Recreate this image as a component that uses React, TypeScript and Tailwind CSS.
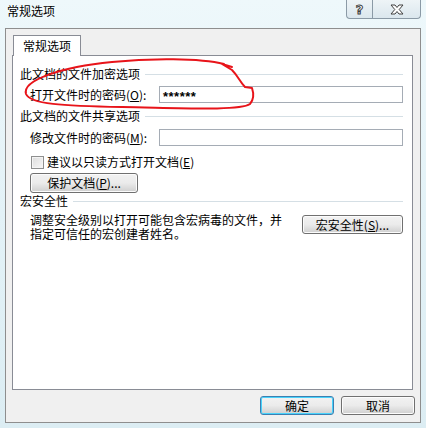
import React from 'react';

const font = "font-['SimSun','Noto_Sans_CJK_SC',sans-serif]";

function GroupHeading({ text, className = '' }: { text: string; className?: string }) {
  return (
    <div className={`flex items-center h-[16px] ${className}`}>
      <span className="leading-[16px]">{text}</span>
      <div className="flex-1 h-px bg-[#d5dfe5] ml-[5px]" />
    </div>
  );
}

function WinButton({ children, className = '', focused = false }: { children: React.ReactNode; className?: string; focused?: boolean }) {
  return (
    <div
      className={`flex items-center justify-center rounded-[3px] border ${
        focused ? 'border-[#3c7fb1] shadow-[inset_0_0_0_1px_#48d2fb]' : 'border-[#707070] shadow-[inset_0_0_0_1px_#fcfcfc]'
      } bg-gradient-to-b from-[#f2f2f2] via-[#ebebeb] to-[#cfcfcf] leading-none ${className}`}
    >
      {children}
    </div>
  );
}

export default function App() {
  return (
    <div className={`relative w-[426px] h-[428px] overflow-hidden bg-gradient-to-b from-[#eef8fb] via-[#e3f2f7] to-[#dcedf3] text-[12px] text-black ${font}`}>
      {/* ── Title bar ── */}
      <div className="flex h-[28px]">
        <span className="pl-[7px] pt-[4px] leading-[14px] [text-shadow:0_0_6px_#ffffff]">常规选项</span>
        <div className="ml-auto mr-[5px] flex h-[19px]">
          <div className="w-[27px] h-full flex items-center justify-center border border-t-0 border-[#8b9aa6] rounded-bl-[4px] bg-gradient-to-b from-[#eef4f7] to-[#dbe7ee]">
            <span className="text-white font-bold text-[13px] leading-none [-webkit-text-stroke:1px_#3f3f3f] font-['DejaVu_Sans',sans-serif]">?</span>
          </div>
          <div className="w-[48px] h-full flex items-center justify-center border border-t-0 border-l-0 border-[#8b9aa6] rounded-br-[4px] bg-gradient-to-b from-[#eef4f7] to-[#dbe7ee]">
            <svg width="14" height="11" viewBox="0 0 14 11">
              <path d="M1 1 H5 L7 3.5 L9 1 H13 L9.2 5.5 L13 10 H9 L7 7.5 L5 10 H1 L4.8 5.5 Z" fill="#ffffff" stroke="#404040" strokeWidth="1" strokeLinejoin="round" />
            </svg>
          </div>
        </div>
      </div>

      {/* ── Client area ── */}
      <div className="ml-[5px] w-[416px] h-[395px] border border-[#8e8e8e] bg-[#f0f0f0] flex flex-col px-[6px] pt-[6px]">
        {/* Tab */}
        <div className="flex">
          <div className="relative z-10 ml-[1px] -mb-px w-[68px] h-[21px] border border-b-0 border-[#898c95] bg-white flex items-center justify-center leading-none pb-[1px]">
            常规选项
          </div>
        </div>

        {/* Panel */}
        <div className="w-[401px] h-[335px] border border-[#898c95] bg-white pl-[7px] pr-[9px] pt-[10px] flex flex-col">
          <GroupHeading text="此文档的文件加密选项" />
          <div className="flex items-center h-[17px] mt-[4px] pl-[10px]">
            <span className="w-[129px] leading-none">
              打开文件时的密码(<span className="underline">O</span>):
            </span>
            <div className="flex-1 h-full border border-[#a5acb5] bg-white flex items-center pl-[3px] font-['Liberation_Sans',sans-serif] text-[13px] font-bold leading-none tracking-[0.5px] pt-[3px]">
              ******
            </div>
          </div>

          <GroupHeading text="此文档的文件共享选项" className="mt-[5px]" />
          <div className="flex items-center h-[17px] mt-[5px] pl-[10px]">
            <span className="w-[129px] leading-none">
              修改文件时的密码(<span className="underline">M</span>):
            </span>
            <div className="flex-1 h-full border border-[#a5acb5] bg-white" />
          </div>

          <div className="flex items-center h-[16px] mt-[8px] pl-[11px]">
            <div className="w-[13px] h-[13px] border border-[#8e8f8f] bg-gradient-to-br from-[#dcdcdc] to-[#f7f7f7] shadow-[inset_0_0_0_1px_#f4f4f4]" />
            <span className="ml-[3px] leading-none">
              建议以只读方式打开文档(<span className="underline">E</span>)
            </span>
          </div>

          <div className="flex mt-[3px] pl-[10px]">
            <WinButton className="w-[108px] h-[20px]">
              保护文档(<span className="underline">P</span>)...
            </WinButton>
          </div>

          <GroupHeading text="宏安全性" />
          <div className="flex items-start mt-[4px] pl-[10px]">
            <p className="leading-[14px]">
              调整安全级别以打开可能包含宏病毒的文件，并
              <br />
              指定可信任的宏创建者姓名。
            </p>
            <WinButton className="ml-auto mt-[2px] w-[101px] h-[19px]">
              宏安全性(<span className="underline">S</span>)...
            </WinButton>
          </div>
        </div>

        {/* Dialog buttons */}
        <div className="flex justify-end gap-[7px] mt-[6px]">
          <WinButton focused className="w-[74px] h-[19px]">确定</WinButton>
          <WinButton className="w-[74px] h-[19px] mr-[-1px]">取消</WinButton>
        </div>
      </div>

      {/* ── Red hand-drawn annotation ── */}
      <svg className="absolute inset-0 pointer-events-none" width="426" height="428" viewBox="0 0 426 428">
        <path
          d="M224 64 C200 58 150 58 112 62 C62 67 22 80 26 94 C30 104 62 106 122 107 C182 108 240 111 250 104 C255 98 253 91 252 88 L245 87 C240 82 238 76 232 70 L222 64 L232 67"
          fill="none"
          stroke="#e8141a"
          strokeWidth="2"
          strokeLinecap="round"
          strokeLinejoin="round"
        />
      </svg>
    </div>
  );
}
